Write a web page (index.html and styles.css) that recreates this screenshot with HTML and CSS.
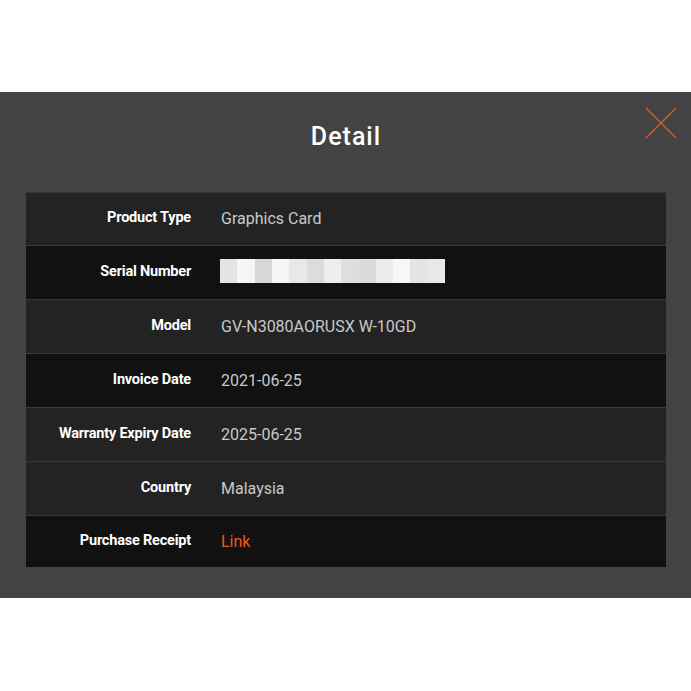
FILE: index.html
```html
<!DOCTYPE html>
<html>
<head>
<meta charset="utf-8">
<link rel="stylesheet" href="styles.css">
</head>
<body>
<div class="modal">
  <svg class="close" width="32" height="32" viewBox="0 0 32 32">
    <path d="M1 1 L31 31 M31 1 L1 31" stroke="#c3602f" stroke-width="1.6" fill="none"/>
  </svg>
  <h1 class="title">Detail</h1>
  <div class="table">
    <div class="row odd first"><div class="label">Product Type</div><div class="value">Graphics Card</div></div>
    <div class="row even"><div class="label">Serial Number</div><div class="value">
      <div class="blur">
        <span style="background:#e4e4e4"></span><span style="background:#f5f5f5"></span><span style="background:#d8d8d8"></span><span style="background:#f6f6f8"></span><span style="background:#e8e8e8"></span><span style="background:#dcdcdc"></span><span style="background:#eeeeee"></span><span style="background:#dedede"></span><span style="background:#dadada"></span><span style="background:#ebebeb"></span><span style="background:#f7f7f7"></span><span style="background:#e4e4e4"></span><span style="background:#e8e8e8"></span>
      </div>
    </div></div>
    <div class="row odd"><div class="label">Model</div><div class="value">GV-N3080AORUSX W-10GD</div></div>
    <div class="row even"><div class="label">Invoice Date</div><div class="value">2021-06-25</div></div>
    <div class="row odd"><div class="label">Warranty Expiry Date</div><div class="value">2025-06-25</div></div>
    <div class="row odd"><div class="label">Country</div><div class="value">Malaysia</div></div>
    <div class="row even last"><div class="label">Purchase Receipt</div><div class="value"><a class="link" href="#">Link</a></div></div>
  </div>
</div>
</body>
</html>
```

FILE: styles.css
```css
html, body {
  margin: 0;
  padding: 0;
  background: #ffffff;
}
body {
  padding-top: 92px;
  font-family: Roboto, "Liberation Sans", sans-serif;
}
.modal {
  position: relative;
  background: #434343;
  height: 506px;
  padding: 0 25px 0 26px;
  box-sizing: border-box;
}
.close {
  position: absolute;
  top: 15px;
  right: 14px;
}
.title {
  margin: 0;
  height: 100px;
  display: flex;
  align-items: center;
  justify-content: center;
  color: #ffffff;
  font-family: Roboto, sans-serif;
  font-weight: 500;
  font-size: 25px;
  letter-spacing: 1px;
  padding-bottom: 11px;
  box-sizing: border-box;
}
.table {
  border-top: 1px solid #353535;
}
.row {
  display: flex;
  align-items: center;
  height: 54px;
  border-bottom: 1px solid #383838;
  box-sizing: border-box;
}
.row.first {
  height: 53px;
}
.row.last {
  border-bottom: none;
  height: 51px;
}
.odd { background: #232323; }
.even { background: #111111; }
.label {
  width: 165px;
  text-align: right;
  color: #ffffff;
  font-weight: 700;
  font-size: 14.5px;
  letter-spacing: -0.2px;
  margin-top: -3px;
}
.value {
  margin-left: 30px;
  color: #c9c9c9;
  font-size: 16px;
  margin-top: -1px;
}
.blur {
  display: flex;
  width: 225px;
  height: 24px;
  margin-left: -1px;
  margin-top: -3px;
}
.blur span {
  flex: 1;
}
.link {
  color: #f0561f;
  text-decoration: none;
}
```
